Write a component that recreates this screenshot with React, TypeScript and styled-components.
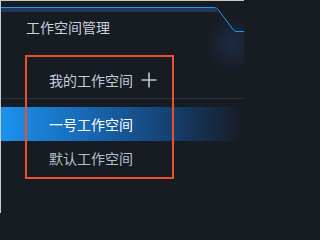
import React from 'react';
import styled, { createGlobalStyle } from 'styled-components';

const GlobalStyle = createGlobalStyle`
	html, body {
		margin: 0;
		padding: 0;
		background: #171b22;
	}
	body {
		font-family: "Noto Sans CJK SC", "Noto Sans", sans-serif;
	}
`;

const Panel = styled.div`
	position: relative;
	width: 243px;
	height: 212px;
	background: #171b22;
	border-left: 1px solid #c9c9c9;
	border-top: 1px solid #c9c9c9;
	overflow: hidden;
	display: flex;
	flex-direction: column;
`;

const HeaderDeco = styled.svg`
	position: absolute;
	top: 0;
	left: 0;
	pointer-events: none;
`;

const Title = styled.div`
	margin-top: 16px;
	padding-left: 25px;
	height: 20px;
	line-height: 20px;
	font-size: 14px;
	color: #c6d2de;
	position: relative;
`;

const SectionHeader = styled.div`
	margin-top: 25px;
	height: 36px;
	padding-left: 48px;
	display: flex;
	align-items: center;
	gap: 8px;
	font-size: 14px;
	color: #c2ceda;
`;

const Divider = styled.div`
	height: 1px;
	margin-right: 1px;
	background: #2a323d;
`;

const List = styled.div`
	margin-top: 8px;
	display: flex;
	flex-direction: column;
`;

const Item = styled.div<{ $active?: boolean }>`
	height: 34px;
	line-height: 34px;
	padding-left: 48px;
	font-size: 14px;
	color: ${(p) => (p.$active ? '#ffffff' : '#b4c0cc')};
	background: ${(p) =>
		p.$active
			? 'linear-gradient(90deg, #1b92ee 0%, #1868b4 35%, #153f70 70%, rgba(23,27,34,0) 100%)'
			: 'transparent'};
`;

const Highlight = styled.div`
	position: absolute;
	left: 24px;
	top: 54px;
	width: 145px;
	height: 120px;
	border: 2px solid #e8502e;
	pointer-events: none;
`;

const PlusIcon = () => (
	<svg width="16" height="16" viewBox="0 0 16 16">
		<path d="M8 0.5 V15.5 M0.5 8 H15.5" stroke="#b9c7d5" strokeWidth="1.6" fill="none" />
	</svg>
);

const App = () => {
	const spaces = [
		{ name: '一号工作空间', active: true },
		{ name: '默认工作空间', active: false },
	];

	return (
		<Panel>
			<GlobalStyle />
			<HeaderDeco width="243" height="70" viewBox="1 1 243 70">
				<defs>
					<radialGradient id="glow" cx="232" cy="44" r="28" gradientUnits="userSpaceOnUse">
						<stop offset="0%" stopColor="#2a5596" stopOpacity="0.3" />
						<stop offset="100%" stopColor="#2a5596" stopOpacity="0" />
					</radialGradient>
				</defs>
				<circle cx="232" cy="44" r="28" fill="url(#glow)" />
				<path d="M0 8 H215 L218 12 H0 Z" fill="#21365a" />
				<path
					d="M0 7.5 H214 Q216.5 7.5 218 9.5 L233 29.5 Q234.5 31.5 237 31.5 H244"
					stroke="#1f9cf0"
					strokeWidth="1"
					fill="none"
				/>
			</HeaderDeco>
			<Title>工作空间管理</Title>
			<SectionHeader>
				我的工作空间
				<PlusIcon />
			</SectionHeader>
			<Divider />
			<List>
				{spaces.map((s) => (
					<Item key={s.name} $active={s.active}>
						{s.name}
					</Item>
				))}
			</List>
			<Highlight />
		</Panel>
	);
};

export default App;
